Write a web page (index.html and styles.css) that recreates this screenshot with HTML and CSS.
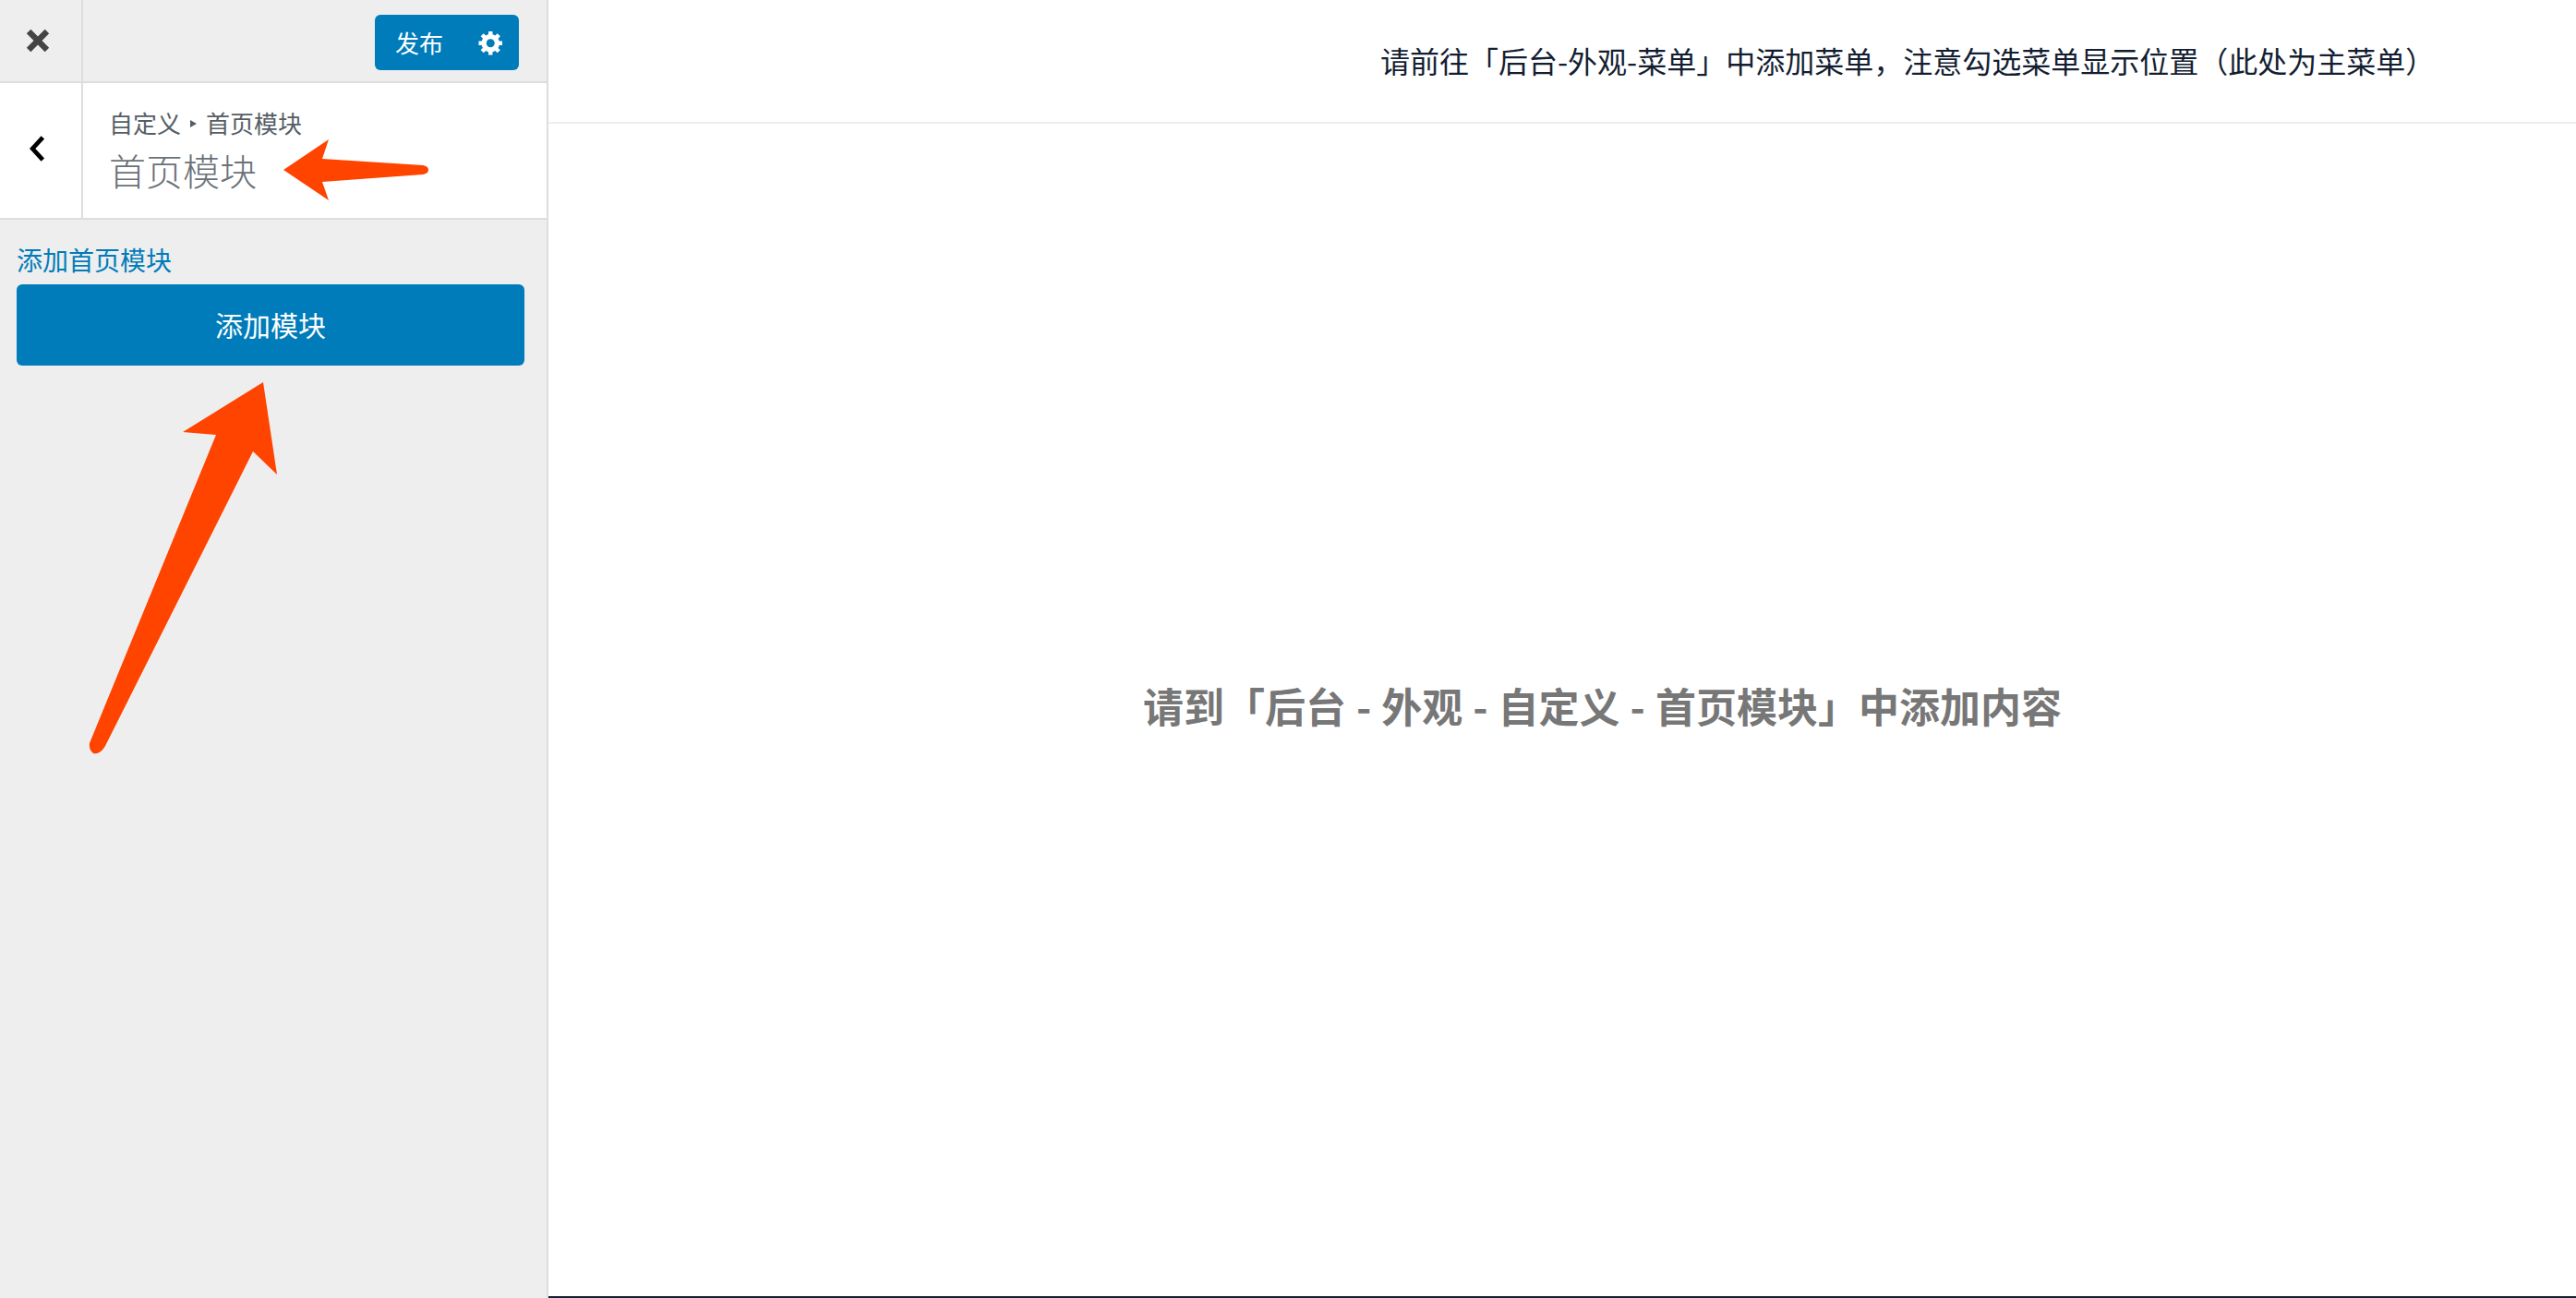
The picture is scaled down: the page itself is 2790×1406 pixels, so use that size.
FILE: index.html
```html
<!DOCTYPE html>
<html lang="zh-CN">
<head>
<meta charset="utf-8">
<title>自定义 首页模块</title>
<link rel="stylesheet" href="styles.css">
</head>
<body>
<div class="app">
  <aside class="sidebar">
    <div class="topbar">
      <div class="close-cell">
        <svg class="close-icon" viewBox="0 0 24 24"><path d="M3.5 3.5 20.5 20.5M20.5 3.5 3.5 20.5"/></svg>
      </div>
      <div class="publish">
        <span class="publish-label">发布</span>
        <svg class="gear" viewBox="0 0 20 20"><path d="M18 12h-2.18c-.17.7-.44 1.35-.81 1.93l1.54 1.54-2.1 2.1-1.54-1.54c-.58.36-1.23.63-1.91.79V19H8v-2.18c-.68-.16-1.33-.43-1.91-.79l-1.54 1.54-2.12-2.12 1.54-1.54c-.36-.58-.63-1.23-.79-1.91H1V9.03h2.17c.16-.7.44-1.35.8-1.94L2.43 5.55l2.1-2.1 1.54 1.54c.58-.37 1.24-.64 1.93-.81V2h3v2.18c.68.16 1.33.43 1.91.79l1.54-1.54 2.12 2.12-1.54 1.54c.36.59.64 1.24.8 1.94H18V12zm-8.5 1.5c1.66 0 3-1.34 3-3s-1.34-3-3-3-3 1.34-3 3 1.34 3 3 3z"/></svg>
      </div>
    </div>
    <div class="section-head">
      <div class="back-cell">
        <svg class="back-icon" viewBox="0 0 16 28"><path d="M13.5 2.5 3 14 13.5 25.5"/></svg>
      </div>
      <div class="section-info">
        <div class="crumb"><span>自定义</span><i class="crumb-sep"></i><span>首页模块</span></div>
        <div class="section-title">首页模块</div>
      </div>
    </div>
    <div class="section-body">
      <div class="field-label">添加首页模块</div>
      <div class="add-button">添加模块</div>
    </div>
  </aside>
  <main class="preview">
    <header class="preview-head">请前往「后台-外观-菜单」中添加菜单&#xFF0C;注意勾选菜单显示位置&#xFF08;此处为主菜单&#xFF09;</header>
    <div class="preview-body">
      <div class="notice">请到「后台 - 外观 - 自定义 - 首页模块」中添加内容</div>
    </div>
  </main>
</div>
<svg class="annotations" viewBox="0 0 2790 1406">
  <path d="M307 184 356 151 349 172 458 179Q464 180 464 184Q464 188 458 189L349 197 356 217Z"/>
  <path d="M285 414 198 468 234 471 97 805Q96 812 101 816Q108 818 114 808L274 489 300 514Z"/>
</svg>
</body>
</html>
```
FILE: styles.css
```css
* { box-sizing: border-box; }
html, body { margin: 0; height: 100%; background: #fff; }
body {
  font-family: "Noto Sans CJK SC", "Noto Sans", sans-serif;
  overflow: hidden;
}
.app { display: flex; height: 1406px; }

.sidebar {
  width: 594px;
  flex: none;
  display: flex;
  flex-direction: column;
  background: #eee;
  border-right: 2px solid #ddd;
}
.topbar {
  height: 90px;
  flex: none;
  display: flex;
  align-items: center;
  justify-content: space-between;
  border-bottom: 2px solid #ddd;
  padding-right: 30px;
}
.close-cell {
  width: 90px;
  height: 100%;
  display: flex;
  align-items: center;
  justify-content: center;
  padding-right: 7px;
  border-right: 2px solid #ddd;
}
.close-icon { width: 28px; height: 28px; fill: none; stroke: #444; stroke-width: 5.5; }
.publish {
  width: 156px;
  height: 60px;
  margin-top: 4px;
  display: flex;
  align-items: center;
  justify-content: space-between;
  padding: 0 15px 0 22px;
  background: #007cba;
  border-radius: 6px;
  color: #fff;
}
.publish-label { font-size: 26px; line-height: 60px; }
.gear { width: 30px; height: 30px; fill: #fff; }

.section-head {
  height: 148px;
  flex: none;
  display: flex;
  background: #fff;
  border-bottom: 2px solid #ddd;
}
.back-cell {
  width: 90px;
  flex: none;
  display: flex;
  align-items: center;
  justify-content: center;
  padding: 0 8px 4px 0;
  border-right: 2px solid #ddd;
}
.back-icon { width: 17px; height: 30px; fill: none; stroke: #000; stroke-width: 4.5; }
.section-info { padding: 25px 0 0 28px; }
.crumb {
  display: flex;
  align-items: center;
  font-size: 26px;
  line-height: 36px;
  color: #555d66;
}
.crumb-sep {
  width: 0;
  height: 0;
  margin: 2px 10px 0 10px;
  border-left: 7px solid #555d66;
  border-top: 4px solid transparent;
  border-bottom: 4px solid transparent;
}
.section-title {
  margin-top: 5px;
  font-size: 40px;
  line-height: 56px;
  font-weight: 300;
  color: #6a7178;
}

.section-body { padding: 21px 24px 0 18px; }
.field-label {
  font-size: 28px;
  line-height: 44px;
  margin-bottom: 5px;
  color: #007cba;
}
.add-button {
  height: 88px;
  display: flex;
  align-items: center;
  justify-content: center;
  padding-bottom: 2px;
  background: #007cba;
  border-radius: 6px;
  font-size: 30px;
  color: #fff;
}

.preview {
  flex: 1;
  min-width: 0;
  display: flex;
  flex-direction: column;
  border-bottom: 2px solid #141e32;
}
.preview-head {
  height: 134px;
  flex: none;
  padding-left: 901px;
  border-bottom: 2px solid #eee;
  font-size: 32px;
  line-height: 130px;
  color: #141e32;
  white-space: nowrap;
}
.preview-body {
  flex: 1;
  display: flex;
  align-items: center;
  justify-content: center;
  padding-left: 87px;
  padding-bottom: 10px;
}
.notice {
  font-size: 44px;
  font-weight: 700;
  word-spacing: 1px;
  color: #777;
  white-space: nowrap;
}

.annotations {
  position: absolute;
  left: 0;
  top: 0;
  width: 2790px;
  height: 1406px;
  fill: #ff4400;
  pointer-events: none;
}
```
